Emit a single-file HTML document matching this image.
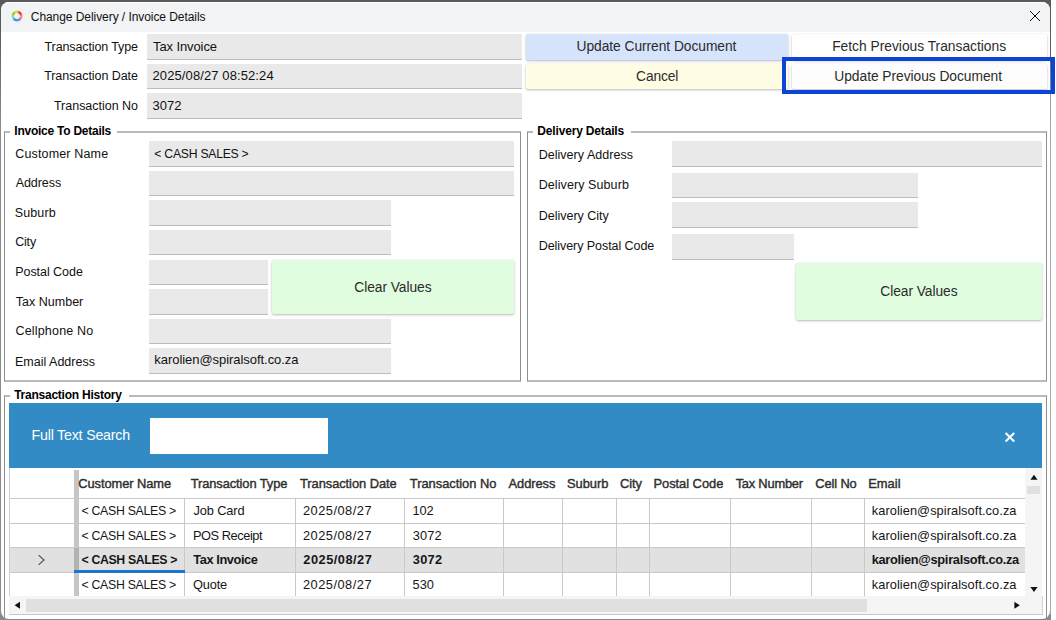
<!DOCTYPE html>
<html><head><meta charset="utf-8"><title>Change Delivery / Invoice Details</title>
<style>
*{box-sizing:border-box;margin:0;padding:0}
html,body{width:1056px;height:620px;overflow:hidden;background:#fff}
body{font-family:"Liberation Sans",sans-serif;color:#111;position:relative}
.a,.t,.fld,.btn,.grp,.vl,.hl{position:absolute}
.t{line-height:16px;white-space:nowrap}
.fld{background:#e9e9e9;border-bottom:1px solid #bcbcbc}
.btn{border-radius:2px;box-shadow:0 1px 2.5px rgba(0,0,0,.27),0 0 1px rgba(0,0,0,.08)}
.grp{border:solid;border-width:2px 1px;border-color:#b9b9b9 #8f8f8f}
.leg{position:absolute;background:#fff;height:3px}
.vl{top:499px;width:1px;height:97px;background:#c9c9c9}
.hl{left:10px;width:1015px;height:1px;background:#c9c9c9}
</style></head><body>
<div class="a" style="left:0;top:0;width:1051px;height:620px;background:linear-gradient(#5a5a5a 0,#5a5a5a 30px,#8a8a8a 120px,#8a8a8a 100%)"></div>
<div class="a" style="left:1050px;top:10px;width:1px;height:604px;background:linear-gradient(#5a5a5a 0,#5a5a5a 40px,#9aa0b4 90px,#a8a8a8 140px,#a8a8a8 100%)"></div>
<div class="a" style="left:1px;top:2px;width:1049px;height:617px;background:#fff;border-radius:8px;overflow:hidden"><div class="a" style="left:0;top:0;width:1049px;height:30px;background:#f1f3f5;border-top:1px solid #fafbfd"></div></div>
<div class="a" style="left:10.8px;top:10.3px;width:12px;height:12px;border-radius:50%;background:conic-gradient(from 0deg,#f7dc3c 0deg,#ee5a2a 25deg,#e8392b 50deg,#f49a78 95deg,#cf7fd0 135deg,#b96cc4 150deg,#2aaae6 175deg,#13a2e4 205deg,#8fd6f2 250deg,#a6d86a 275deg,#8cc63f 305deg,#d7dc3c 340deg,#f7dc3c 360deg);-webkit-mask:radial-gradient(circle,transparent 2.5px,#000 3.3px,#000 5.1px,transparent 5.9px);mask:radial-gradient(circle,transparent 2.5px,#000 3.3px,#000 5.1px,transparent 5.9px)"></div>
<svg class="a" style="left:1029px;top:10px" width="12" height="12" viewBox="0 0 12 12"><path d="M1 1L11 11M11 1L1 11" stroke="#111" stroke-width="1" fill="none"/></svg>

<div class="fld" style="left:147px;top:34px;width:375px;height:26px"></div>
<div class="fld" style="left:147px;top:64px;width:375px;height:25px"></div>
<div class="fld" style="left:147px;top:93px;width:375px;height:26px"></div>

<div class="btn" style="left:526px;top:34px;width:262px;height:26px;background:#d6e4fb"></div>
<div class="btn" style="left:792px;top:34px;width:255px;height:26px;background:#fefefe"></div>
<div class="btn" style="left:526px;top:64px;width:262px;height:25px;background:#fffee4"></div>
<div class="btn" style="left:792px;top:64px;width:255px;height:25px;background:#fdfdfd"></div>
<div class="a" style="left:782px;top:57px;width:273px;height:37px;border:4px solid #0b44d8"></div>

<div class="grp" style="left:4px;top:131px;width:517px;height:251px"></div>
<div class="leg" style="left:10px;top:131px;width:107px"></div>
<div class="fld" style="left:149px;top:141px;width:365px;height:26px"></div>
<div class="fld" style="left:149px;top:171px;width:365px;height:25px"></div>
<div class="fld" style="left:149px;top:200px;width:242px;height:26px"></div>
<div class="fld" style="left:149px;top:230px;width:242px;height:25px"></div>
<div class="fld" style="left:149px;top:260px;width:119px;height:25px"></div>
<div class="fld" style="left:149px;top:289px;width:119px;height:26px"></div>
<div class="fld" style="left:149px;top:319px;width:242px;height:25px"></div>
<div class="fld" style="left:149px;top:348px;width:242px;height:26px"></div>
<div class="btn" style="left:272px;top:260px;width:242px;height:54px;background:#e0fde0"></div>

<div class="grp" style="left:527px;top:131px;width:520px;height:251px"></div>
<div class="leg" style="left:533px;top:131px;width:98px"></div>
<div class="fld" style="left:672px;top:141px;width:370px;height:26px"></div>
<div class="fld" style="left:672px;top:173px;width:246px;height:25px"></div>
<div class="fld" style="left:672px;top:202px;width:246px;height:26px"></div>
<div class="fld" style="left:672px;top:234px;width:122px;height:26px"></div>
<div class="btn" style="left:796px;top:263px;width:246px;height:57px;background:#e0fde0"></div>

<div class="grp" style="left:4px;top:395px;width:1043px;height:230px"></div>
<div class="leg" style="left:10px;top:395px;width:119px"></div>
<div class="a" style="left:9px;top:403px;width:1033px;height:65px;background:#338bc5"></div>
<div class="a" style="left:150px;top:418px;width:178px;height:36px;background:#fff"></div>
<svg class="a" style="left:1004px;top:431px" width="12" height="12" viewBox="0 0 12 12"><path d="M1.6 1.9L10.2 10.5M10.2 1.9L1.6 10.5" stroke="#fff" stroke-width="2.1" fill="none"/></svg>

<div class="a" style="left:9px;top:468px;width:1px;height:129px;background:#d0d0d0"></div>
<div class="a" style="left:10px;top:548px;width:1015px;height:25px;background:#e1e1e1"></div>
<div class="hl" style="top:498px"></div>
<div class="hl" style="top:523px"></div>
<div class="hl" style="top:547px"></div>
<div class="hl" style="top:572px"></div>
<div class="vl" style="left:184px"></div>
<div class="vl" style="left:295px"></div>
<div class="vl" style="left:404px"></div>
<div class="vl" style="left:503px"></div>
<div class="vl" style="left:562px"></div>
<div class="vl" style="left:616px"></div>
<div class="vl" style="left:649px"></div>
<div class="vl" style="left:730px"></div>
<div class="vl" style="left:811px"></div>
<div class="vl" style="left:864px"></div>
<div class="a" style="left:74px;top:470px;width:5px;height:126px;background:#c6c6c6"></div>
<div class="a" style="left:74px;top:548px;width:5px;height:25px;background:#b2b2b2"></div>
<div class="a" style="left:74px;top:570px;width:111px;height:3px;background:#1976d2"></div>
<svg class="a" style="left:36px;top:554px" width="10" height="12" viewBox="0 0 10 12"><path d="M2.6 1.2L8 6L2.6 10.8" stroke="#4a4a55" stroke-width="1.1" fill="none"/></svg>

<div class="a" style="left:1025px;top:468px;width:17px;height:128px;background:#f5f5f5"></div>
<div class="a" style="left:1027px;top:486px;width:13px;height:8px;background:#e0e0e0"></div>
<svg class="a" style="left:1030px;top:474px" width="8" height="6" viewBox="0 0 8 6"><path d="M0.4 5.8L4 0.8L7.6 5.8Z" fill="#111"/></svg>
<svg class="a" style="left:1030px;top:586px" width="8" height="6" viewBox="0 0 8 6"><path d="M0.4 0.9L4 5.9L7.6 0.9Z" fill="#111"/></svg>
<div class="a" style="left:9px;top:596px;width:1034px;height:19px;background:#f5f5f5;border-bottom:1px solid #c8c8c8;border-right:1px solid #d0d0d0"></div>
<div class="a" style="left:26px;top:599px;width:841px;height:13px;background:#e0e0e0"></div>
<svg class="a" style="left:14px;top:601px" width="7" height="8" viewBox="0 0 7 8"><path d="M6 0.8L0.6 4.3L6 7.8Z" fill="#111"/></svg>
<svg class="a" style="left:1014px;top:601px" width="7" height="8" viewBox="0 0 7 8"><path d="M0.4 0.8L5.8 4.3L0.4 7.8Z" fill="#111"/></svg>

<div class="t" style="left:30.80px;top:9px;font-size:12px;letter-spacing:-0.062px;color:#111">Change Delivery / Invoice Details</div>
<div class="t" style="left:44.52px;top:39px;font-size:12.5px;letter-spacing:-0.111px;color:#111">Transaction Type</div>
<div class="t" style="left:44.15px;top:68px;font-size:12.5px;letter-spacing:-0.062px;color:#111">Transaction Date</div>
<div class="t" style="left:53.97px;top:98px;font-size:12.5px;letter-spacing:-0.017px;color:#111">Transaction No</div>
<div class="t" style="left:15.21px;top:146px;font-size:12.5px;letter-spacing:0.160px;color:#111">Customer Name</div>
<div class="t" style="left:15.69px;top:175px;font-size:12.5px;letter-spacing:-0.067px;color:#111">Address</div>
<div class="t" style="left:14.73px;top:205px;font-size:12.5px;letter-spacing:0.129px;color:#111">Suburb</div>
<div class="t" style="left:15.21px;top:234px;font-size:12.5px;letter-spacing:-0.192px;color:#111">City</div>
<div class="t" style="left:15.22px;top:264px;font-size:12.5px;letter-spacing:-0.046px;color:#111">Postal Code</div>
<div class="t" style="left:15.84px;top:294px;font-size:12.5px;letter-spacing:0.006px;color:#111">Tax Number</div>
<div class="t" style="left:15.43px;top:323px;font-size:12.5px;letter-spacing:0.192px;color:#111">Cellphone No</div>
<div class="t" style="left:15.00px;top:354px;font-size:12.5px;letter-spacing:0.004px;color:#111">Email Address</div>
<div class="t" style="left:538.70px;top:147px;font-size:12.5px;letter-spacing:0.030px;color:#111">Delivery Address</div>
<div class="t" style="left:538.70px;top:177px;font-size:12.5px;letter-spacing:0.088px;color:#111">Delivery Suburb</div>
<div class="t" style="left:538.70px;top:208px;font-size:12.5px;letter-spacing:0.000px;color:#111">Delivery City</div>
<div class="t" style="left:538.70px;top:238px;font-size:12.5px;letter-spacing:-0.057px;color:#111">Delivery Postal Code</div>
<div class="t" style="left:153.10px;top:39px;font-size:13px;letter-spacing:-0.113px;color:#111">Tax Invoice</div>
<div class="t" style="left:152.50px;top:68px;font-size:13px;letter-spacing:0.103px;color:#111">2025/08/27 08:52:24</div>
<div class="t" style="left:152.55px;top:98px;font-size:13px;letter-spacing:0.020px;color:#111">3072</div>
<div class="t" style="left:154.36px;top:146px;font-size:12.2px;letter-spacing:-0.247px;color:#111">&lt; CASH SALES &gt;</div>
<div class="t" style="left:154.30px;top:352px;font-size:13px;letter-spacing:-0.049px;color:#111">karolien@spiralsoft.co.za</div>
<div class="t" style="left:576.50px;top:39px;font-size:13.8px;letter-spacing:-0.051px;color:#2b2b2b">Update Current Document</div>
<div class="t" style="left:832.21px;top:39px;font-size:13.8px;letter-spacing:-0.007px;color:#2b2b2b">Fetch Previous Transactions</div>
<div class="t" style="left:636.10px;top:69px;font-size:13.8px;letter-spacing:-0.156px;color:#2b2b2b">Cancel</div>
<div class="t" style="left:834.34px;top:69px;font-size:13.8px;letter-spacing:-0.045px;color:#2b2b2b">Update Previous Document</div>
<div class="t" style="left:354.28px;top:280px;font-size:13.8px;letter-spacing:-0.060px;color:#2b2b2b">Clear Values</div>
<div class="t" style="left:880.28px;top:284px;font-size:13.8px;letter-spacing:-0.060px;color:#2b2b2b">Clear Values</div>
<div class="t" style="left:14.30px;top:123px;font-size:12px;letter-spacing:-0.245px;color:#000;font-weight:bold">Invoice To Details</div>
<div class="t" style="left:537.30px;top:123px;font-size:12px;letter-spacing:-0.167px;color:#000;font-weight:bold">Delivery Details</div>
<div class="t" style="left:14.20px;top:387px;font-size:12px;letter-spacing:-0.242px;color:#000;font-weight:bold">Transaction History</div>
<div class="t" style="left:31.50px;top:427px;font-size:14.2px;letter-spacing:-0.188px;color:#fff">Full Text Search</div>
<div class="t" style="left:78.18px;top:476px;font-size:12.9px;letter-spacing:-0.073px;color:#2e2e2e;-webkit-text-stroke:0.4px #2e2e2e">Customer Name</div>
<div class="t" style="left:190.64px;top:476px;font-size:12.9px;letter-spacing:-0.088px;color:#2e2e2e;-webkit-text-stroke:0.4px #2e2e2e">Transaction Type</div>
<div class="t" style="left:299.99px;top:476px;font-size:12.9px;letter-spacing:-0.066px;color:#2e2e2e;-webkit-text-stroke:0.4px #2e2e2e">Transaction Date</div>
<div class="t" style="left:409.80px;top:476px;font-size:12.9px;letter-spacing:-0.025px;color:#2e2e2e;-webkit-text-stroke:0.4px #2e2e2e">Transaction No</div>
<div class="t" style="left:508.57px;top:476px;font-size:12.9px;letter-spacing:-0.068px;color:#2e2e2e;-webkit-text-stroke:0.4px #2e2e2e">Address</div>
<div class="t" style="left:567.03px;top:476px;font-size:12.9px;letter-spacing:-0.038px;color:#2e2e2e;-webkit-text-stroke:0.4px #2e2e2e">Suburb</div>
<div class="t" style="left:620.11px;top:476px;font-size:12.9px;letter-spacing:-0.102px;color:#2e2e2e;-webkit-text-stroke:0.4px #2e2e2e">City</div>
<div class="t" style="left:653.45px;top:476px;font-size:12.9px;letter-spacing:-0.032px;color:#2e2e2e;-webkit-text-stroke:0.4px #2e2e2e">Postal Code</div>
<div class="t" style="left:735.64px;top:476px;font-size:12.9px;letter-spacing:-0.224px;color:#2e2e2e;-webkit-text-stroke:0.4px #2e2e2e">Tax Number</div>
<div class="t" style="left:815.20px;top:476px;font-size:12.9px;letter-spacing:-0.110px;color:#2e2e2e;-webkit-text-stroke:0.4px #2e2e2e">Cell No</div>
<div class="t" style="left:868.14px;top:476px;font-size:12.9px;letter-spacing:0.072px;color:#2e2e2e;-webkit-text-stroke:0.4px #2e2e2e">Email</div>
<div class="t" style="left:81.53px;top:503px;font-size:12.3px;letter-spacing:-0.295px;color:#161616">&lt; CASH SALES &gt;</div>
<div class="t" style="left:193.42px;top:503px;font-size:12.8px;letter-spacing:-0.101px;color:#161616">Job Card</div>
<div class="t" style="left:303.00px;top:503px;font-size:12.8px;letter-spacing:0.496px;color:#161616">2025/08/27</div>
<div class="t" style="left:412.44px;top:503px;font-size:12.8px;letter-spacing:-0.092px;color:#161616">102</div>
<div class="t" style="left:871.74px;top:503px;font-size:12.8px;letter-spacing:0.066px;color:#161616">karolien@spiralsoft.co.za</div>
<div class="t" style="left:81.53px;top:528px;font-size:12.3px;letter-spacing:-0.295px;color:#161616">&lt; CASH SALES &gt;</div>
<div class="t" style="left:192.92px;top:528px;font-size:12.8px;letter-spacing:-0.433px;color:#161616">POS Receipt</div>
<div class="t" style="left:303.00px;top:528px;font-size:12.8px;letter-spacing:0.496px;color:#161616">2025/08/27</div>
<div class="t" style="left:412.72px;top:528px;font-size:12.8px;letter-spacing:0.116px;color:#161616">3072</div>
<div class="t" style="left:871.74px;top:528px;font-size:12.8px;letter-spacing:0.066px;color:#161616">karolien@spiralsoft.co.za</div>
<div class="t" style="left:81.58px;top:552px;font-size:12.3px;letter-spacing:-0.360px;color:#161616;font-weight:bold">&lt; CASH SALES &gt;</div>
<div class="t" style="left:193.33px;top:552px;font-size:12.8px;letter-spacing:-0.415px;color:#161616;font-weight:bold">Tax Invoice</div>
<div class="t" style="left:303.28px;top:552px;font-size:12.8px;letter-spacing:0.505px;color:#161616;font-weight:bold">2025/08/27</div>
<div class="t" style="left:412.79px;top:552px;font-size:12.8px;letter-spacing:0.283px;color:#161616;font-weight:bold">3072</div>
<div class="t" style="left:871.68px;top:552px;font-size:12.8px;letter-spacing:-0.299px;color:#161616;font-weight:bold">karolien@spiralsoft.co.za</div>
<div class="t" style="left:81.53px;top:577px;font-size:12.3px;letter-spacing:-0.295px;color:#161616">&lt; CASH SALES &gt;</div>
<div class="t" style="left:192.99px;top:577px;font-size:12.8px;letter-spacing:-0.161px;color:#161616">Quote</div>
<div class="t" style="left:303.00px;top:577px;font-size:12.8px;letter-spacing:0.496px;color:#161616">2025/08/27</div>
<div class="t" style="left:412.62px;top:577px;font-size:12.8px;letter-spacing:-0.092px;color:#161616">530</div>
<div class="t" style="left:871.74px;top:577px;font-size:12.8px;letter-spacing:0.066px;color:#161616">karolien@spiralsoft.co.za</div>
</body></html>
